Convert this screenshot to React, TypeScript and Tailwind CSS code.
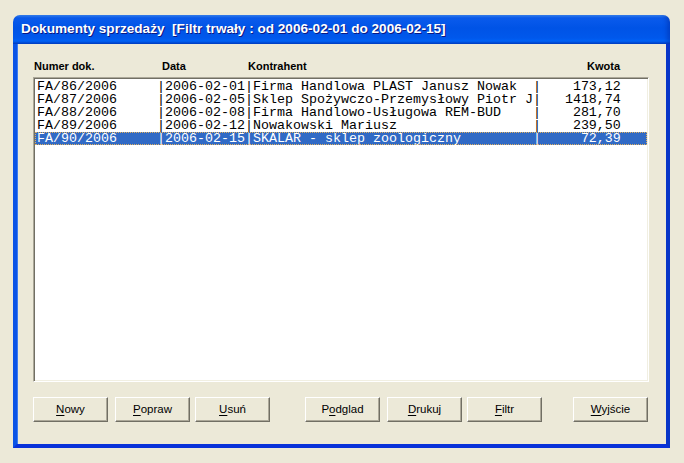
import React from "react";

const rows = [
  { num: "FA/86/2006", date: "2006-02-01", name: "Firma Handlowa PLAST Janusz Nowak", amt: "173,12" },
  { num: "FA/87/2006", date: "2006-02-05", name: "Sklep Spożywczo-Przemysłowy Piotr J", amt: "1418,74" },
  { num: "FA/88/2006", date: "2006-02-08", name: "Firma Handlowo-Usługowa REM-BUD", amt: "281,70" },
  { num: "FA/89/2006", date: "2006-02-12", name: "Nowakowski Mariusz", amt: "239,50" },
  { num: "FA/90/2006", date: "2006-02-15", name: "SKALAR - sklep zoologiczny", amt: "72,39" },
];

function line(r: (typeof rows)[number]) {
  return r.num.padEnd(15, " ") + "|" + r.date + "|" + r.name.padEnd(35, " ") + "|" + r.amt.padStart(10, " ");
}

function Btn({ pre, u, post, className }: { pre?: string; u: string; post: string; className?: string }) {
  return (
    <div
      className={
        "w-[75px] h-[25px] flex items-center justify-center bg-[#ECE9D8] border-t border-l border-t-white border-l-white border-r border-b border-r-[#716F64] border-b-[#716F64] shadow-[inset_-1px_-1px_0_#ACA899] text-[11.5px] text-black " +
        (className ?? "")
      }
      style={{ fontFamily: '"Liberation Sans", Arial, sans-serif' }}
    >
      <span>
        {pre}
        <span className="underline underline-offset-2">{u}</span>
        {post}
      </span>
    </div>
  );
}

export default function App() {
  return (
    <div className="w-[684px] h-[463px] bg-[#ECE9D8] pt-[15px] pl-[13px] overflow-hidden">
      <div className="w-[657px] h-[433px] flex flex-col">
        <div className="h-[29px] rounded-t-[7px] bg-[linear-gradient(to_bottom,#3D8DF9_0%,#0A5BEC_10%,#0053E6_45%,#0058EC_80%,#0064F8_90%,#0041C8_100%)] flex items-center pl-[8px] shadow-[inset_-3px_0_4px_rgba(0,30,140,0.35)]">
          <span
            className="text-white font-bold text-[13.6px] whitespace-pre [text-shadow:1px_1px_0_#0A1883]"
            style={{ fontFamily: '"Liberation Sans", Arial, sans-serif' }}
          >
            Dokumenty sprzedaży  [Filtr trwały : od 2006-02-01 do 2006-02-15]
          </span>
        </div>
        <div className="flex-1 bg-[#ECE9D8] border-l-4 border-r-4 border-b-4 border-l-[#0A54E6] border-r-[#0835C8] border-b-[#0831D9] shadow-[inset_1px_0_0_#3A7CF0]">
          <div className="pt-[16px] pl-[16px]">
            <div
              className="h-[17px] w-[616px] flex text-[11px] font-bold text-black leading-[13px]"
              style={{ fontFamily: '"Liberation Sans", Arial, sans-serif' }}
            >
              <div className="w-[128px] pl-[1px]">Numer dok.</div>
              <div className="w-[87px] pl-[1px]">Data</div>
              <div className="flex-1 pl-[0px]">Kontrahent</div>
              <div className="pr-[29px]">Kwota</div>
            </div>
            <div className="w-[616px] h-[305px] bg-white border-t border-l border-t-[#ACA899] border-l-[#ACA899] border-b border-r border-b-white border-r-white shadow-[inset_1px_1px_0_#716F64,inset_-1px_-1px_0_#F1EFE2] pt-[2px] pl-[1px] pr-[1px]">
              {rows.map((r, i) => {
                const sel = i === rows.length - 1;
                return (
                  <div
                    key={r.num}
                    className={
                      "h-[13px] leading-[13px] text-[13.33px] whitespace-pre pl-[2px] overflow-hidden " +
                      (sel ? "bg-[#316AC5] text-white outline outline-1 outline-dotted outline-[#E0B060] -outline-offset-1" : "text-black")
                    }
                    style={{ fontFamily: '"Liberation Mono", "Courier New", monospace' }}
                  >
                    {line(r)}
                  </div>
                );
              })}
            </div>
            <div className="flex mt-[15px]">
              <Btn u="N" post="owy" className="ml-[0px]" />
              <Btn u="P" post="opraw" className="ml-[7px]" />
              <Btn u="U" post="suń" className="ml-[5px]" />
              <Btn pre="P" u="o" post="dglad" className="ml-[35px]" />
              <Btn u="D" post="rukuj" className="ml-[7px]" />
              <Btn u="F" post="iltr" className="ml-[5px]" />
              <Btn u="W" post="yjście" className="ml-[31px]" />
            </div>
          </div>
        </div>
      </div>
    </div>
  );
}
